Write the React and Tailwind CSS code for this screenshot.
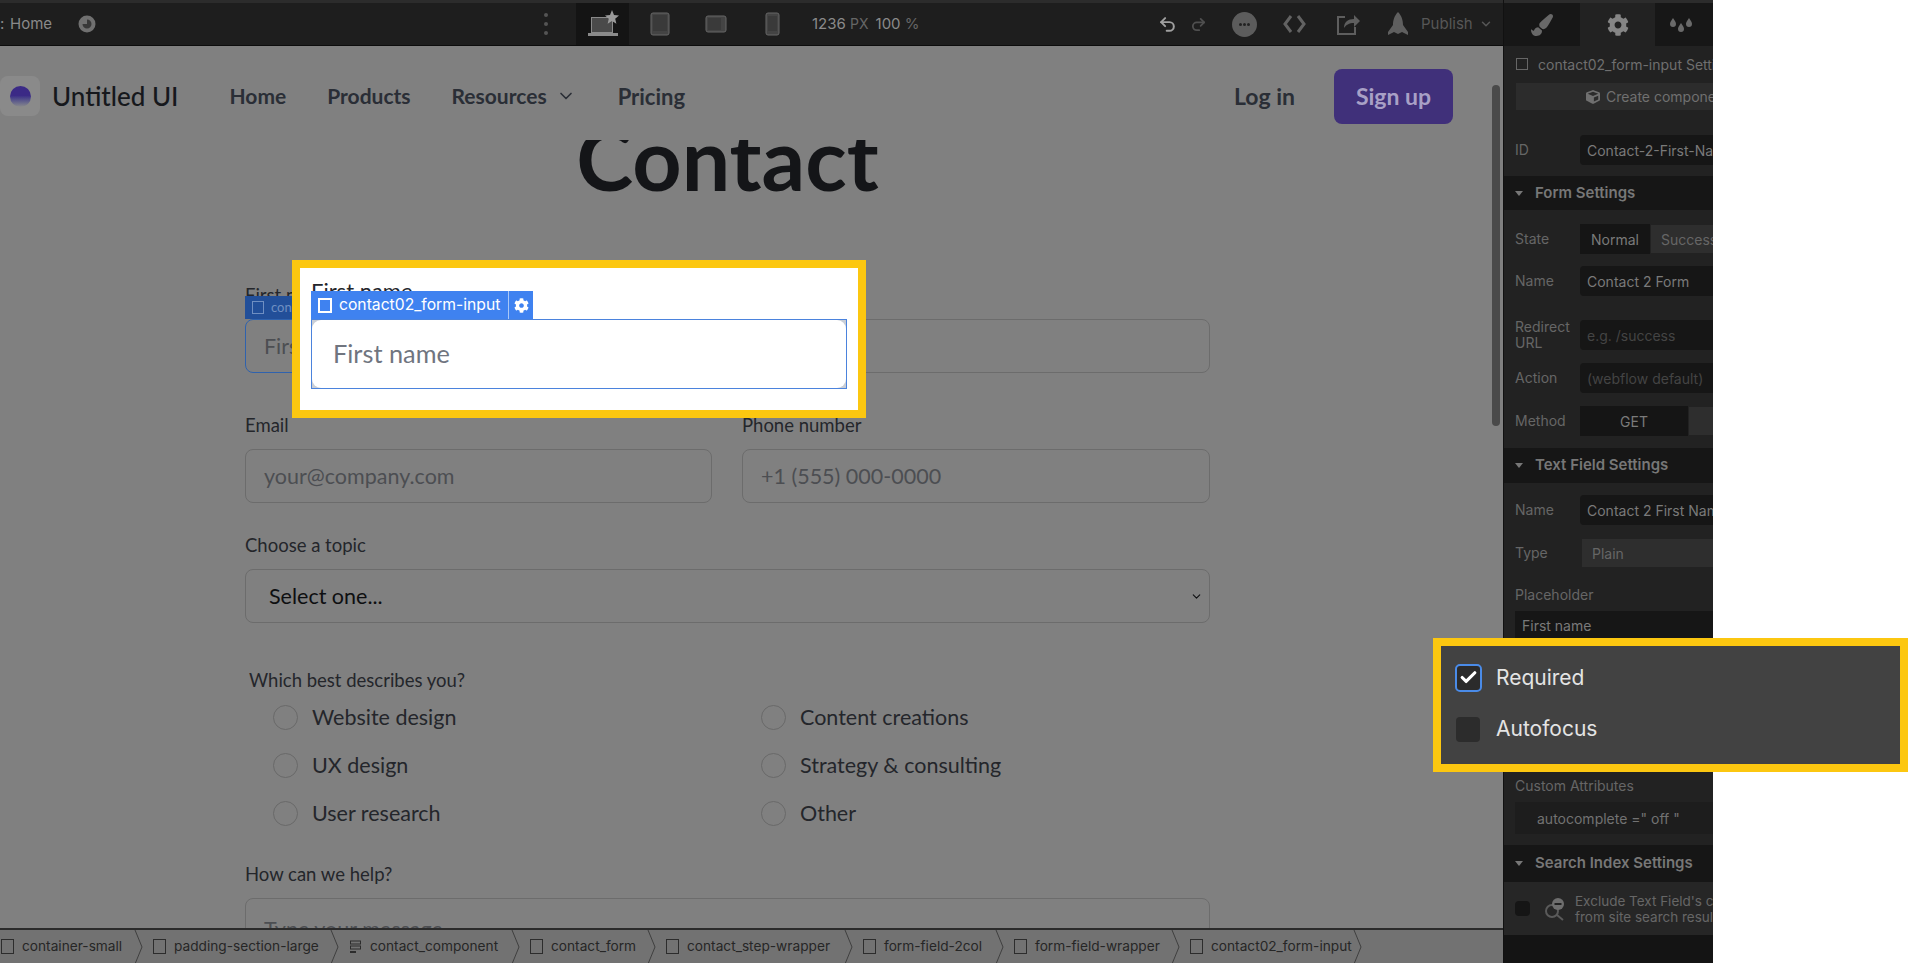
import { ChevronDown, Check, Undo2, Redo2 } from 'lucide-react'
import { FaCog, FaPaintBrush, FaCube } from 'react-icons/fa'

const FONT = 'font-["Lato","Liberation_Sans",sans-serif]'
const UI_FONT = 'font-["Inter","Liberation_Sans",sans-serif]'

const CRUMBS = [
  { label: 'container-small', width: 'w-[153px]', pad: 'pl-px' },
  { label: 'padding-section-large', width: 'w-[196px]' },
  { label: 'contact_component', width: 'w-[181px]', list: true },
  { label: 'contact_form', width: 'w-[136px]' },
  { label: 'contact_step-wrapper', width: 'w-[197px]' },
  { label: 'form-field-2col', width: 'w-[151px]' },
  { label: 'form-field-wrapper', width: 'w-[176px]' },
  { label: 'contact02_form-input', width: 'w-[182px]' },
]

const LEFT_RADIOS = ['Website design', 'UX design', 'User research']
const RIGHT_RADIOS = ['Content creations', 'Strategy & consulting', 'Other']

function Crumb({ crumb }) {
  return (
    <div className={`${crumb.width} ${crumb.pad || ''} h-full shrink-0 flex items-center`}>
      {crumb.list ? (
        <svg width="13" height="14" viewBox="0 0 13 14" className="shrink-0 text-[#2c2c2c]" fill="none" stroke="currentColor">
          <rect x="1.5" y="1" width="10" height="3" />
          <rect x="1.5" y="6" width="10" height="3" />
          <path d="M1 12h6" strokeWidth="2" />
        </svg>
      ) : (
        <span className="w-[13px] h-[15px] shrink-0 border border-[#2c2c2c]" />
      )}
      <span className="ml-2 text-[13.7px] text-[#262626] whitespace-nowrap">{crumb.label}</span>
      <svg width="9" height="34" viewBox="0 0 9 34" fill="none" stroke="#3f3f3f" className="ml-auto shrink-0 mr-[10px]">
        <path d="M1 0l7 17-7 17" />
      </svg>
    </div>
  )
}

function TopBar() {
  return (
    <div className={`${UI_FONT} h-[46px] shrink-0 flex items-center bg-[#1e1e1e] border-t-[3px] border-b border-t-[#2c2c2c] border-b-[#0d0d0d] text-[#8a8a8a] text-[15px] overflow-hidden`}>
      <span className="w-[10px]">:</span>
      <span className="w-[42px]">Home</span>
      <svg width="18" height="18" viewBox="0 0 18 18" className="ml-[26px] shrink-0">
        <circle cx="9" cy="9" r="8.500" fill="#707070" />
        <path d="M9 4.500a4.500 4.500 0 1 1-4.500 4.500H9z" fill="#383838" />
      </svg>
      <div className="ml-[447px] w-[6px] flex flex-col items-center gap-[5px]">
        <span className="w-[4px] h-[4px] rounded-full bg-[#555]" />
        <span className="w-[4px] h-[4px] rounded-full bg-[#555]" />
        <span className="w-[4px] h-[4px] rounded-full bg-[#555]" />
      </div>
      <div className="ml-[27px] w-[53px] h-full flex items-center justify-center bg-[#141414]">
        <svg width="32" height="28" viewBox="0 0 32 28">
          <rect x="4.500" y="7.500" width="21" height="15" fill="#4a4a4a" stroke="#8a8a8a" />
          <rect x="1" y="23" width="30" height="3" fill="#8a8a8a" />
          <path d="M25 0l2 5 5 .4-3.800 3.300 1.200 5L25 11l-4.400 2.700 1.200-5L18 5.400 23 5z" fill="#9a9a9a" />
        </svg>
      </div>
      <svg width="20" height="24" viewBox="0 0 20 24" className="ml-[21px] shrink-0">
        <rect x="1" y="1" width="18" height="22" rx="2" fill="#444" stroke="#666" />
        <rect x="3" y="3" width="14" height="16" fill="#3a3a3a" />
      </svg>
      <svg width="22" height="18" viewBox="0 0 22 18" className="ml-[35px] shrink-0">
        <rect x="1" y="1" width="20" height="16" rx="2" fill="#444" stroke="#666" />
        <rect x="3" y="3" width="13" height="12" fill="#3a3a3a" />
      </svg>
      <svg width="15" height="24" viewBox="0 0 15 24" className="ml-[38px] shrink-0">
        <rect x="1" y="1" width="13" height="22" rx="2" fill="#444" stroke="#666" />
        <rect x="3" y="4" width="9" height="15" fill="#3a3a3a" />
      </svg>
      <div className="ml-[32px] w-[120px] shrink-0 whitespace-nowrap">
        1236 <span className="text-[#666] text-[14px]">PX</span>
        <span className="ml-[7px]">100 <span className="text-[#666]">%</span></span>
      </div>
      <Undo2 size={19} strokeWidth={2.5} className="ml-[226px] shrink-0 text-[#a0a0a0]" />
      <Redo2 size={17} strokeWidth={2.5} className="ml-[13px] shrink-0 text-[#4f4f4f]" />
      <div className="ml-[25px] w-[25px] h-[25px] shrink-0 rounded-full bg-[#5c5c5c] flex items-center justify-center gap-px">
        <span className="w-[3px] h-[3px] rounded-full bg-[#222]" />
        <span className="w-[3px] h-[3px] rounded-full bg-[#222]" />
        <span className="w-[3px] h-[3px] rounded-full bg-[#222]" />
      </div>
      <svg width="25" height="20" viewBox="0 0 25 20" className="ml-[25px] shrink-0" fill="none" stroke="#626262" strokeWidth="3">
        <path d="M9 2l-6 8 6 8M16 2l6 8-6 8" />
      </svg>
      <svg width="25" height="24" viewBox="0 0 25 24" className="ml-[29px] shrink-0" fill="none" stroke="#5e5e5e" strokeWidth="2">
        <path d="M9 5H2v17h17v-7" />
        <path d="M8 16c0-6 4-9 10-9V3l6 6-6 6v-4c-5 0-8 2-10 5z" fill="#5e5e5e" stroke="none" />
      </svg>
      <svg width="22" height="24" viewBox="0 0 22 24" className="ml-[26px] shrink-0">
        <path d="M11 0c4 4 5 9 5 13l5 7v3l-6-3-4 2-4-2-6 3v-3l5-7C6 9 7 4 11 0z" fill="#5f5f5f" />
      </svg>
      <span className="ml-[12px] text-[#575757]">Publish</span>
      <ChevronDown size={14} strokeWidth={2.5} className="ml-[6px] shrink-0 text-[#575757]" />
    </div>
  )
}

function Label({ children }) {
  return <div className="h-[22px] flex items-center text-[18.5px] text-[#24262b] whitespace-nowrap">{children}</div>
}

function Field({ label, placeholder, selected }) {
  return (
    <div>
      <Label>{label}</Label>
      <div className={`mt-3 h-[54px] flex items-center pl-[18px] text-[21.5px] text-[#4c4e52] rounded-lg border ${selected ? 'border-[#2f62ad]' : 'border-[#6c6c6c]'}`}>
        {placeholder}
      </div>
    </div>
  )
}

function Radio({ label }) {
  return (
    <div className="h-[48px] flex items-center">
      <span className="w-[25px] h-[25px] shrink-0 rounded-full border border-[#696969]" />
      <span className="ml-[14px] text-[21.5px] text-[#24262b]">{label}</span>
    </div>
  )
}

function Canvas() {
  return (
    <div className={`${FONT} relative flex-1 min-h-0 overflow-hidden bg-[#808080]`}>
      <nav className="h-[94px] pt-[6px] flex items-center text-[#2a2e36] text-[21px] font-bold">
        <div className="w-[40px] h-[40px] flex items-center justify-center rounded-lg bg-[#8a8a8a]">
          <div className="w-[21px] h-[21px] rounded-full bg-gradient-to-b from-[#3b2a86] via-[#3b2a86] via-45% to-[#8a8a8a]" />
        </div>
        <span className="ml-[12px] text-[26px] font-medium text-[#16181c]">Untitled UI</span>
        <span className="ml-[51px]">Home</span>
        <span className="ml-[41px]">Products</span>
        <span className="ml-[41px]">Resources</span>
        <ChevronDown size={20} className="ml-[9px]" />
        <span className="ml-[42px] text-[22px]">Pricing</span>
        <span className="ml-auto text-[23px]">Log in</span>
        <span className="ml-[39px] mr-[50px] w-[119px] h-[55px] flex items-center justify-center rounded-lg bg-[#40307a] text-[#a8a0c6] text-[23px]">Sign up</span>
      </nav>
      <div className="ml-[245px] w-[965px] h-[52px] overflow-hidden flex items-end justify-center">
        <h1 className="text-[86px] leading-none font-bold text-[#141518] mb-[-9px]">Contact</h1>
      </div>
      <form className="ml-[245px] w-[965px] mt-[93px]">
        <div className="grid grid-cols-[467px_468px] gap-x-[30px] gap-y-[42px]">
          <Field label="First name" placeholder="First name" selected />
          <Field label="Last name" placeholder="Last name" />
          <Field label="Email" placeholder="your@company.com" />
          <Field label="Phone number" placeholder="+1 (555) 000-0000" />
        </div>
        <div className="mt-[32px]">
          <Label>Choose a topic</Label>
          <div className="mt-3 h-[54px] flex items-center justify-between pl-[23px] pr-[6px] text-[21.5px] text-[#0e0f11] rounded-lg border border-[#6c6c6c]">
            Select one...
            <ChevronDown size={13} />
          </div>
        </div>
        <div className="mt-[47px] ml-[4px]">
          <Label>Which best describes you?</Label>
          <div className="mt-[1px] ml-[24px] grid grid-cols-[488px_1fr]">
            <div>{LEFT_RADIOS.map((r) => <Radio key={r} label={r} />)}</div>
            <div>{RIGHT_RADIOS.map((r) => <Radio key={r} label={r} />)}</div>
          </div>
        </div>
        <div className="mt-[27px]">
          <Label>How can we help?</Label>
          <div className="mt-3 h-[100px] pt-[14px] pl-[18px] text-[21.5px] text-[#4c4e52] rounded-lg border border-[#6c6c6c]">Type your message</div>
        </div>
      </form>
      {/* Selected element tag behind the callout */}
      <div className="absolute left-[245px] top-[250px] w-[60px] h-[23px] flex items-center pl-[7px] gap-[7px] bg-[#224f99] text-[#6f8fc2] text-[13px]">
        <span className="w-[12px] h-[13px] border border-[#6f8fc2]" />
        con
      </div>
      <div className="absolute right-[3px] top-[39px] w-[8px] h-[341px] rounded-full bg-[#4a4a4a]" />
    </div>
  )
}

function Breadcrumbs() {
  return (
    <div className={`${UI_FONT} h-[35px] shrink-0 flex items-center bg-[#727272] border-t-2 border-[#2b2b2b] overflow-hidden`}>
      {CRUMBS.map((c) => <Crumb key={c.label} crumb={c} />)}
    </div>
  )
}

function Row({ label, className = '', children }) {
  return (
    <div className={`h-[30px] shrink-0 flex items-center pl-[11px] ${className}`}>
      <div className="w-[65px] shrink-0 leading-[16px] text-[#666]">{label}</div>
      {children}
    </div>
  )
}

function Input({ children, muted }) {
  return (
    <div className={`h-[30px] flex-1 min-w-0 flex items-center pl-[7px] rounded-l-sm whitespace-nowrap overflow-hidden bg-[#161616] ${muted ? 'text-[#444]' : 'text-[#7a7a7a]'}`}>
      {children}
    </div>
  )
}

function SectionHeader({ title, className = '' }) {
  return (
    <div className={`shrink-0 flex items-center pl-[11px] bg-[#161616] font-semibold text-[#777] text-[15px] ${className}`}>
      <span className="w-0 h-0 border-x-[4px] border-x-transparent border-t-[5px] border-t-[#777]" />
      <span className="ml-[12px] whitespace-nowrap">{title}</span>
    </div>
  )
}

function Panel() {
  return (
    <aside className={`${UI_FONT} w-[210px] shrink-0 h-full flex flex-col overflow-hidden bg-[#222] border-l border-[#111] text-[14px]`}>
      <div className="h-[46px] shrink-0 flex border-t-[3px] border-[#2c2c2c]">
        <div className="w-[76px] flex items-center justify-center bg-[#171717]">
          <FaPaintBrush size={22} className="text-[#686868]" />
        </div>
        <div className="w-[75px] flex items-center justify-center bg-[#222]">
          <FaCog size={22} className="text-[#858585]" />
        </div>
        <div className="flex-1 flex items-center pl-[14px] bg-[#171717]">
          <svg width="24" height="18" viewBox="0 0 24 18" fill="#6a6a6a">
            <path d="M4 2c2 3 3 4 3 6a3 3 0 0 1-6 0c0-2 1-3 3-6zM20 2c2 3 3 4 3 6a3 3 0 0 1-6 0c0-2 1-3 3-6zM12 7c2 3 3 4 3 6a3 3 0 0 1-6 0c0-2 1-3 3-6z" />
          </svg>
        </div>
      </div>
      <div className="h-[36px] shrink-0 flex items-center pl-[12px] text-[#6f6f6f] whitespace-nowrap">
        <span className="w-[12px] h-[12px] shrink-0 border border-[#666]" />
        <span className="ml-[10px] text-[14px]">contact02_form-input Settings</span>
      </div>
      <div className="ml-[12px] mt-px h-[27px] shrink-0 flex items-center pl-[70px] bg-[#2c2c2c] text-[#707070] whitespace-nowrap text-[14px]">
        <FaCube size={14} className="shrink-0" />
        <span className="ml-[6px]">Create component</span>
      </div>
      <Row label="ID" className="mt-[25px]"><Input>Contact-2-First-Name</Input></Row>
      <SectionHeader title="Form Settings" className="mt-[11px] h-[34px]" />
      <Row label="State" className="mt-[14px]">
        <div className="w-[70px] shrink-0 h-[30px] flex items-center justify-center bg-[#151515] text-[#7a7a7a]">Normal</div>
        <div className="ml-px flex-1 min-w-0 h-[28px] pl-[10px] flex items-center bg-[#2e2e2e] text-[#666]">Success</div>
      </Row>
      <Row label="Name" className="mt-[12px]"><Input>Contact 2 Form</Input></Row>
      <Row label={<>Redirect<br />URL</>} className="mt-[24px]"><Input muted>e.g. /success</Input></Row>
      <Row label="Action" className="mt-[13px]"><Input muted>(webflow default)</Input></Row>
      <Row label="Method" className="mt-[13px]">
        <div className="w-[108px] shrink-0 h-[30px] flex items-center justify-center bg-[#151515] text-[#7a7a7a]">GET</div>
        <div className="ml-px flex-1 min-w-0 h-[28px] bg-[#2e2e2e]" />
      </Row>
      <SectionHeader title="Text Field Settings" className="mt-[12px] h-[35px]" />
      <Row label="Name" className="mt-[12px]"><Input>Contact 2 First Name</Input></Row>
      <Row label="Type" className="mt-[13px]">
        <div className="ml-[2px] flex-1 h-[28px] pl-[10px] flex items-center bg-[#2e2e2e] text-[#666]">Plain</div>
      </Row>
      <div className="mt-[18px] pl-[11px] h-[16px] shrink-0 flex items-center text-[#666]">Placeholder</div>
      <div className="mt-[9px] ml-[11px] h-[28px] shrink-0 flex items-center pl-[7px] bg-[#161616] text-[#7a7a7a]">First name</div>
      <div className="mt-[138px] pl-[11px] h-[16px] shrink-0 flex items-center text-[#666]">Custom Attributes</div>
      <div className="mt-[9px] ml-[11px] h-[32px] shrink-0 flex items-center pl-[22px] bg-[#1d1d1d] text-[#727272] whitespace-nowrap">autocomplete =" off "</div>
      <SectionHeader title="Search Index Settings" className="mt-[11px] h-[37px]" />
      <div className="h-[53px] shrink-0 flex items-center pl-[11px] bg-[#262626] text-[#666] text-[13.5px]">
        <span className="w-[15px] h-[15px] shrink-0 rounded-sm bg-[#151515]" />
        <svg width="22" height="24" viewBox="0 0 22 24" className="ml-[13px] shrink-0" fill="none">
          <circle cx="9" cy="14" r="6" stroke="#5a5a5a" strokeWidth="2" />
          <path d="M14 18l6 5" stroke="#5a5a5a" strokeWidth="2" />
          <circle cx="15" cy="7" r="6" fill="#6e6e6e" />
          <path d="M11.500 7h7" stroke="#222" strokeWidth="2" />
        </svg>
        <div className="ml-[10px] leading-[16px] whitespace-nowrap">Exclude Text Field's content<br />from site search results</div>
      </div>
      <div className="flex-1 bg-[#141414]" />
    </aside>
  )
}

function InputCallout() {
  return (
    <div className={`${FONT} absolute left-[292px] top-[260px] w-[574px] h-[158px] border-8 border-[#fcc710] bg-white px-[11px] pt-[11px] overflow-hidden`}>
      <div className="h-[12px] text-[22px] leading-[24px] text-[#24262b]">First name</div>
      <div className={`${UI_FONT} relative w-[222px] h-[28px] flex items-center pl-[7px] bg-[#3f82f0] text-white text-[15.7px]`}>
        <span className="w-[14px] h-[15px] shrink-0 border-2 border-white" />
        <span className="ml-[7px] whitespace-nowrap">contact02_form-input</span>
        <span className="ml-auto w-[25px] h-full flex items-center justify-center border-l border-[#a9c8f7]">
          <FaCog size={15} />
        </span>
      </div>
      <div className="h-[70px] border-[1.5px] border-[#4b83dd] bg-[#c9ced6]">
        <div className="h-full flex items-center pl-[21px] rounded-[9px] bg-white text-[25.3px] text-[#70757f]">First name</div>
      </div>
    </div>
  )
}

function CheckboxCallout() {
  return (
    <div className={`${UI_FONT} absolute right-0 top-[638px] w-[475px] h-[134px] border-8 border-[#fcc710] bg-[#424242] text-[#e4e4e4] text-[21px]`}>
      <div className="h-[59px] mt-[2px] pl-[14px] flex items-center">
        <span className="w-[27px] h-[28px] flex items-center justify-center rounded-[5px] border-2 border-[#4a8be8] bg-[#2b2b2b]">
          <Check size={19} strokeWidth={4} className="text-white" />
        </span>
        <span className="ml-[14px]">Required</span>
      </div>
      <div className="h-[44px] pl-[15px] flex items-center">
        <span className="w-[24px] h-[25px] rounded-[4px] bg-[#2c2c2c]" />
        <span className="ml-[16px]">Autofocus</span>
      </div>
    </div>
  )
}

export default function App() {
  return (
    <div className="relative w-full h-[963px] overflow-hidden bg-white">
      <div className="w-[1713px] h-full flex">
        <div className="w-[1503px] h-full flex flex-col">
          <TopBar />
          <Canvas />
          <Breadcrumbs />
        </div>
        <Panel />
      </div>
      <InputCallout />
      <CheckboxCallout />
    </div>
  )
}
